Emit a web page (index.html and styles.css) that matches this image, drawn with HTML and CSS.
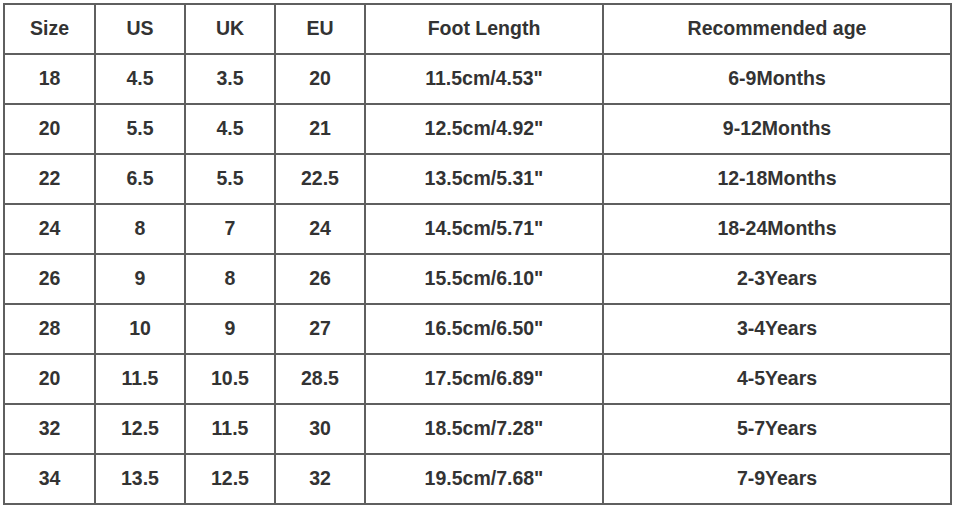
FILE: index.html
```html
<!DOCTYPE html>
<html>
<head>
<meta charset="utf-8">
<link rel="stylesheet" href="styles.css">
</head>
<body>
<div class="chart">
  <div class="cell">Size</div><div class="cell">US</div><div class="cell">UK</div><div class="cell">EU</div><div class="cell">Foot Length</div><div class="cell">Recommended age</div>
  <div class="cell">18</div><div class="cell">4.5</div><div class="cell">3.5</div><div class="cell">20</div><div class="cell">11.5cm/4.53"</div><div class="cell">6-9Months</div>
  <div class="cell">20</div><div class="cell">5.5</div><div class="cell">4.5</div><div class="cell">21</div><div class="cell">12.5cm/4.92"</div><div class="cell">9-12Months</div>
  <div class="cell">22</div><div class="cell">6.5</div><div class="cell">5.5</div><div class="cell">22.5</div><div class="cell">13.5cm/5.31"</div><div class="cell">12-18Months</div>
  <div class="cell">24</div><div class="cell">8</div><div class="cell">7</div><div class="cell">24</div><div class="cell">14.5cm/5.71"</div><div class="cell">18-24Months</div>
  <div class="cell">26</div><div class="cell">9</div><div class="cell">8</div><div class="cell">26</div><div class="cell">15.5cm/6.10"</div><div class="cell">2-3Years</div>
  <div class="cell">28</div><div class="cell">10</div><div class="cell">9</div><div class="cell">27</div><div class="cell">16.5cm/6.50"</div><div class="cell">3-4Years</div>
  <div class="cell">20</div><div class="cell">11.5</div><div class="cell">10.5</div><div class="cell">28.5</div><div class="cell">17.5cm/6.89"</div><div class="cell">4-5Years</div>
  <div class="cell">32</div><div class="cell">12.5</div><div class="cell">11.5</div><div class="cell">30</div><div class="cell">18.5cm/7.28"</div><div class="cell">5-7Years</div>
  <div class="cell">34</div><div class="cell">13.5</div><div class="cell">12.5</div><div class="cell">32</div><div class="cell">19.5cm/7.68"</div><div class="cell">7-9Years</div>
</div>
</body>
</html>
```
FILE: styles.css
```css
html, body {
  margin: 0;
  padding: 0;
  background: #ffffff;
}
body {
  padding: 3px 0 0 3px;
}
.chart {
  display: grid;
  grid-template-columns: 89px 88px 88px 88px 236px 346px;
  grid-auto-rows: 48px;
  gap: 2px;
  padding: 2px;
  background: #5f5f5f;
  width: max-content;
}
.cell {
  background: #ffffff;
  display: flex;
  align-items: center;
  justify-content: center;
  padding-bottom: 1px;
  font-family: "Liberation Sans", Arial, sans-serif;
  font-weight: bold;
  font-size: 19.5px;
  color: #333333;
}
```
